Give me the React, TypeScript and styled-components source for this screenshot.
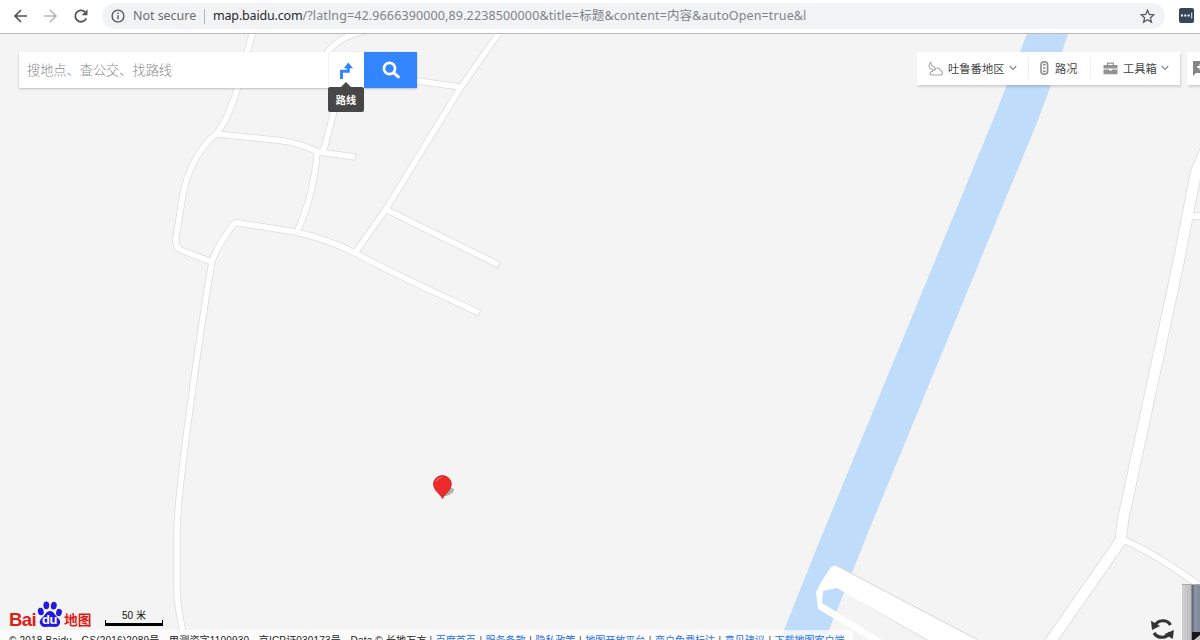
import React from "react";
import styled, { createGlobalStyle } from "styled-components";

const Global = createGlobalStyle`
  * { box-sizing: border-box; }
  body { margin: 0; overflow: hidden; background: #f4f4f4; font-family: "Noto Sans", "Noto Sans CJK SC", sans-serif; }
  svg { display: block; flex: none; }
`;

const Page = styled.div`
  width: 1200px;
  height: 640px;
  overflow: hidden;
  display: flex;
  flex-direction: column;
`;

const BrowserBar = styled.header`
  height: 34px;
  flex: none;
  display: flex;
  align-items: flex-start;
  padding: 3px 0 0 13px;
  background: #fff;
  border-bottom: 1px solid #b9b9b9;
`;

const NavButton = styled.span<{ $gap: number }>`
  display: flex;
  margin: 5px ${(p) => p.$gap}px 0 0;
`;

const AddressBar = styled.div`
  width: 1063px;
  height: 26px;
  border-radius: 13px;
  background: #f1f3f4;
  display: flex;
  align-items: center;
  padding: 0 10px 0 9px;
  color: #808489;
  font-size: 12.5px;
  line-height: 26px;
  white-space: nowrap;
`;

const Security = styled.span`
  width: 71px;
  margin-left: 8px;
  color: #6b6f73;
  letter-spacing: -0.04px;
`;

const Divider = styled.span`
  width: 1px;
  height: 15px;
  background: #b4b7ba;
  margin-right: 8px;
`;

const Url = styled.span`
  flex: 1;
  letter-spacing: 0.13px;
`;

const Host = styled.span`
  color: #26292c;
  letter-spacing: -0.17px;
`;

const Extension = styled.span`
  width: 15px;
  height: 15px;
  margin: 5px 0 0 14px;
  border-radius: 2px;
  background: #34475a;
  display: flex;
  align-items: center;
  justify-content: center;
`;

const MapArea = styled.main`
  flex: 1;
  position: relative;
  overflow: hidden;
`;

const SearchBox = styled.div`
  position: absolute;
  left: 19px;
  top: 18px;
  height: 36px;
  display: flex;
  background: #fff;
  box-shadow: 0 1px 2px rgba(0, 0, 0, 0.22);
`;

const SearchInput = styled.div`
  width: 309px;
  padding-left: 8px;
  font: 300 13.2px/36px "Noto Sans CJK SC", sans-serif;
  color: #8b8b8b;
`;

const RouteButton = styled.div`
  width: 36px;
  display: flex;
  justify-content: center;
  padding-top: 10px;
  border-left: 1px solid #f3f3f3;
  position: relative;
`;

const SearchButton = styled.div`
  width: 53px;
  background: #3385ff;
  display: flex;
  align-items: center;
  justify-content: center;
`;

const Tooltip = styled.div`
  position: absolute;
  left: -1px;
  top: 35px;
  width: 36px;
  height: 25px;
  border-radius: 2px;
  background: #474747;
  color: #fff;
  font: 700 10.2px/25px "Noto Sans CJK SC", sans-serif;
  text-align: center;

  &::before {
    content: "";
    position: absolute;
    left: 13px;
    top: -5px;
    border: 5px solid transparent;
    border-top: 0;
    border-bottom-color: #474747;
  }
`;

const Tools = styled.div`
  position: absolute;
  left: 917px;
  top: 18px;
  height: 33px;
  display: flex;
  gap: 7px;
`;

const ToolPanel = styled.div<{ $width: number }>`
  width: ${(p) => p.$width}px;
  height: 33px;
  padding-bottom: 1px;
  background: #fff;
  display: flex;
  align-items: center;
  box-shadow: 1px 2px 2px rgba(0, 0, 0, 0.15);
`;

const Tool = styled.div<{ $width: number; $pad: number; $gap: number }>`
  width: ${(p) => p.$width}px;
  height: 20px;
  padding-left: ${(p) => p.$pad}px;
  display: flex;
  align-items: center;
  font: 400 11.3px/20px "Noto Sans CJK SC", sans-serif;
  color: #444;
  white-space: nowrap;

  & + & { border-left: 1px solid #eee; }
  & > span { margin: 0 4px 0 ${(p) => p.$gap}px; }
`;

const Brand = styled.div`
  position: absolute;
  left: 9px;
  top: 565px;
  height: 30px;
  display: flex;
  align-items: flex-end;
  color: #dd1d18;
`;

const BrandLatin = styled.span`
  width: 28px;
  font: 700 18.6px/19px "Liberation Sans", sans-serif;
  letter-spacing: -0.6px;
`;

const Paw = styled.span`
  width: 26px;
  height: 28px;
  position: relative;
  margin-bottom: 1px;
`;

const PawText = styled.span`
  position: absolute;
  left: 5px;
  top: 12px;
  color: #fff;
  font: 700 13px/15px "Liberation Sans", sans-serif;
  letter-spacing: -0.5px;
`;

const BrandHan = styled.span`
  margin-left: 1px;
  font: 700 13.7px/19px "Noto Sans CJK SC", sans-serif;
`;

const Scale = styled.div`
  position: absolute;
  left: 105px;
  top: 575px;
  width: 58px;
  height: 17px;
  border: solid #000;
  border-width: 0 1px 3px;
  text-align: center;
  font: 400 10px/13px "Liberation Sans", "Noto Sans CJK SC", sans-serif;
  color: #111;
  border-image: linear-gradient(transparent 11px, #000 11px) 0 1 3 1;
`;

const Copyright = styled.footer`
  position: absolute;
  left: 0;
  top: 596px;
  width: 853px;
  height: 20px;
  padding: 3px 0 0 9px;
  background: rgba(255, 255, 255, 0.7);
  display: flex;
  white-space: nowrap;
  font: 400 10px/16px "Liberation Sans", "Noto Sans CJK SC", sans-serif;
  color: #222;
`;

const Legal = styled.span<{ $width: number }>`
  width: ${(p) => p.$width}px;
  flex: none;
  letter-spacing: 0.19px;
`;

const FooterLink = styled.span`
  color: #2c6fe0;
  &::before { content: "|"; color: #444; margin: 0 3.6px; }
`;

const RefreshButton = styled.div`
  position: absolute;
  left: 1150px;
  top: 583px;
`;

const Thumbnail = styled.div`
  position: absolute;
  left: 1182px;
  top: 550px;
  width: 18px;
  height: 56px;
  padding-left: 10px;
  border-top: 1px solid #aaa;
  background: linear-gradient(90deg, #d0d0d0 0, #bdbdbd 9px, #596273 10px, #8d96a7 13px, #808a9d 100%);
`;

const roads = [
  "M254,28 L246,56 C238,88 230,118 216,134 C200,146 186,172 182,200 L176,238 Q175,248 182,250.500 L212,262",
  "M216,134 L280,140.500 Q300,143 318,152 L355,157",
  "M366,31 Q340,35 325,55",
  "M338,80 L333,115 L323,153",
  "M317,152 C315,180 310,202 297,232",
  "M212,262 Q216,248 233,225 Q235,222 239,223 L296,232 Q330,240 355,253 C390,272 430,290 479,313",
  "M501,30 L461,87 L386,209 L355,253",
  "M410,80 L461,87",
  "M386,209.500 L498.500,264.800",
  "M212,262 C205,300 178,480 177,530 L177,590 C177,608 181,622 185,642",
];

const deadEnds = ["M350,156.300 L355.800,157.100", "M475,311.200 L479.800,313.400", "M494,262.600 L499.300,265.200"];
const wideRoads = ["M1210,140 L1196,172 L1179,260 L1123,520 L1120.500,541 L1048,645"];
const sideRoads = ["M1121,539 Q1150,550 1200,586", "M1192,216 L1202,216"];

function Roads({ paths, width }: { paths: string[]; width: number }) {
  return (
    <>
      {paths.map((d) => (
        <path key={d} d={d} strokeWidth={width} />
      ))}
    </>
  );
}

function MapCanvas() {
  const pier =
    "M831,567 L835,565.500 L977,640 L928,640 L837,588 L823,591 L822,603 L882,640 L870,640 L818,609 L816,592 L823,579 Z";
  return (
    <svg width="1200" height="606" viewBox="0 34 1200 606" fill="none" strokeLinejoin="round">
      <rect y="34" width="1200" height="606" fill="#f4f4f4" />
      <path d="M1027,34 L993,120 L820,540 L780,640 L825,640 L865,540 L1038,120 L1051,85 L1068,34Z" fill="#bfdcfa" />
      <g stroke="#dcdcdc">
        <Roads paths={roads} width={7} />
        <Roads paths={deadEnds} width={7} />
        <Roads paths={wideRoads} width={12} />
        <Roads paths={sideRoads} width={7.5} />
        <path d="M835,565.500 L977,640 M866,604 L928,640" strokeWidth="2" />
      </g>
      <g stroke="#fff">
        <Roads paths={roads} width={5.5} />
        <Roads paths={wideRoads} width={10.4} />
        <Roads paths={sideRoads} width={6} />
      </g>
      <path d={pier} fill="#fff" />
      <ellipse cx="448" cy="492" rx="6.500" ry="3.200" transform="rotate(-25 448 492)" fill="#b3b3b3" />
      <path d="M442.500,498.500 C440,493.500 433.500,490.500 433.500,484 A8.800,8.300 0 0 1 451.300,484 C451.300,490.500 445,493.500 442.500,498.500Z" fill="#ee2a2d" stroke="#b92a2b" strokeWidth=".8" />
      <path d="M436,481.500 Q437.500,478 441,477.500" stroke="#f88" strokeWidth="1" />
    </svg>
  );
}

const Chevron = () => (
  <svg width="8" height="6" viewBox="0 0 8 6" fill="none" stroke="#818799" strokeWidth="1.200">
    <path d="M.8 1 4 4.400 7.200 1" />
  </svg>
);

export default function App() {
  return (
    <Page>
      <Global />
      <BrowserBar>
        <NavButton $gap={15}>
          <svg width="15" height="16" viewBox="0 0 15 16" fill="none" stroke="#505357" strokeWidth="1.700">
            <path d="M14 8H2M8 2 2 8l6 6" />
          </svg>
        </NavButton>
        <NavButton $gap={15}>
          <svg width="15" height="16" viewBox="0 0 15 16" fill="none" stroke="#b7b9bb" strokeWidth="1.700">
            <path d="M1 8h12M7 2l6 6-6 6" />
          </svg>
        </NavButton>
        <NavButton $gap={13}>
          <svg width="16" height="16" viewBox="0 0 16 16" fill="none" stroke="#505357" strokeWidth="1.800">
            <path d="M13.200 10.300A5.700 5.700 0 1 1 12 4" />
            <path d="M14.500 1.200v6H8.700z" fill="#505357" stroke="none" />
          </svg>
        </NavButton>
        <AddressBar>
          <svg width="14" height="14" viewBox="0 0 14 14" fill="none" stroke="#56595d" strokeWidth="1.400">
            <circle cx="7" cy="7" r="5.900" />
            <path d="M7 6.200v4M7 3.500v1.500" />
          </svg>
          <Security>Not secure</Security>
          <Divider />
          <Url>
            <Host>map.baidu.com</Host>/?latlng=42.9666390000,89.2238500000&amp;title=标题&amp;content=内容&amp;autoOpen=true&amp;l
          </Url>
          <svg width="15" height="15" viewBox="0 0 15 15" fill="none" stroke="#55585c" strokeWidth="1.300">
            <path d="M7.500 1.300 9.300 5.500 13.700 5.900 10.400 8.800 11.400 13.100 7.500 10.800 3.600 13.100 4.600 8.800 1.300 5.900 5.700 5.500Z" />
          </svg>
        </AddressBar>
        <Extension>
          <svg width="13" height="7" viewBox="0 0 13 7" fill="#fff">
            <path d="M1 2.500h2v2H1zM4.300 2.500h2v2h-2zM7.600 2.500h2v2h-2zM11.300 .5h.9v6h-.9z" />
          </svg>
        </Extension>
      </BrowserBar>
      <MapArea>
        <MapCanvas />
        <SearchBox>
          <SearchInput>搜地点、查公交、找路线</SearchInput>
          <RouteButton>
            <svg width="16" height="18" viewBox="0 0 16 18">
              <path d="M2.500 17V9.200H9.300V5" fill="none" stroke="#3385ff" strokeWidth="3" />
              <path d="M4.800 6.200 9.300.6 14 6.200Z" fill="#3385ff" />
            </svg>
            <Tooltip>路线</Tooltip>
          </RouteButton>
          <SearchButton>
            <svg width="18" height="18" viewBox="0 0 18 18" fill="none" stroke="#fff">
              <circle cx="7.500" cy="7.500" r="5.600" strokeWidth="2.600" />
              <path d="m11.800 11.800 4.500 4" strokeWidth="3" strokeLinecap="round" />
            </svg>
          </SearchButton>
        </SearchBox>
        <Tools>
          <ToolPanel $width={263}>
            <Tool $width={111} $pad={11} $gap={5}>
              <svg width="15" height="15" viewBox="0 0 15 15" fill="none" stroke="#a5a5a5" strokeWidth="1.100">
                <path d="M3.500 14h8.700a2.200 2.200 0 0 0 0-4.500c-.3-3-4.400-3.300-5.200-.6-1.300-.7-2.400.2-2.200 1.500C1.300 10.500 1.300 14 3.500 14ZM4.900 8.900C.8 8 0 4.200 2.700 1.300c.1 3 1.700 4.600 4.700 5.300" />
              </svg>
              <span>吐鲁番地区</span>
              <Chevron />
            </Tool>
            <Tool $width={62} $pad={11} $gap={6}>
              <svg width="9" height="14" viewBox="0 0 9 14" fill="none" stroke="#8c8c8c" strokeWidth="1.600">
                <rect x="1" y=".8" width="6.600" height="12.400" rx="3" />
                <path d="M3 3.600h2.600M3 7h2.600M3 10.400h2.600" strokeWidth="1.700" />
              </svg>
              <span>路况</span>
            </Tool>
            <Tool $width={90} $pad={12} $gap={5}>
              <svg width="15" height="13" viewBox="0 0 15 13" fill="#929292">
                <path d="M4 3V.6h7V3h3.500v3.500H.5V3zm1.200 0h4.600V1.700H5.200zM.5 7.500H6v1h3v-1h5.500v4.700H.5z" />
              </svg>
              <span>工具箱</span>
              <Chevron />
            </Tool>
          </ToolPanel>
          <ToolPanel $width={100}>
            <Tool $width={100} $pad={6} $gap={0}>
              <svg width="14" height="16" viewBox="0 0 14 16" fill="#858585">
                <path fillRule="evenodd" d="M0 1h14v12H3l-3 3zM6.500 4v2H4.300v2h2.200v2h2V8h2V6h-2V4z" />
              </svg>
            </Tool>
          </ToolPanel>
        </Tools>
        <Brand>
          <BrandLatin>Bai</BrandLatin>
          <Paw>
            <svg width="26" height="28" viewBox="0 0 26 28" fill="#2319dc">
              <ellipse cx="3.800" cy="11.500" rx="2.900" ry="3.800" transform="rotate(-12 3.800 11.500)" />
              <ellipse cx="9.300" cy="5.300" rx="2.900" ry="3.900" />
              <ellipse cx="16.800" cy="5.700" rx="2.900" ry="3.900" transform="rotate(12 16.800 5.700)" />
              <ellipse cx="22" cy="12.500" rx="2.900" ry="3.700" transform="rotate(12 22 12.500)" />
              <path d="M13 11c3.500 0 4.500 3.500 7 6s4 4 2.600 7.300C21 28 17 26.800 13 26.800S5.500 28 3.500 24.500 4 19 6 17s3.500-6 7-6Z" />
            </svg>
            <PawText>du</PawText>
          </Paw>
          <BrandHan>地图</BrandHan>
        </Brand>
        <Scale>50 米</Scale>
        <Copyright>
          <Legal $width={417}>
            © 2018 Baidu - GS(2016)2089号 - 甲测资字1100930 - 京ICP证030173号 - Data © 长地万方
          </Legal>
          <FooterLink>百度首页</FooterLink>
          <FooterLink>服务条款</FooterLink>
          <FooterLink>隐私政策</FooterLink>
          <FooterLink>地图开放平台</FooterLink>
          <FooterLink>商户免费标注</FooterLink>
          <FooterLink>意见建议</FooterLink>
          <FooterLink>下载地图客户端</FooterLink>
        </Copyright>
        <RefreshButton>
          <svg width="26" height="25" viewBox="0 0 26 25" fill="none" stroke="#333" strokeWidth="3.200">
            <path d="M5 8.500C8 2.500 17 2 20.500 8M20 15.500C17 21.500 8 22 4 16" />
            <path d="M1 3.700 2 13l8-4zM24 13l-1.300 9L14.500 17z" fill="#333" stroke="none" />
          </svg>
        </RefreshButton>
        <Thumbnail>
          <svg width="8" height="55" viewBox="0 0 8 55">
            <path d="M0 47H8V55H0Z" fill="#171717" />
            <path d="M2 55 8 50V55Z" fill="#c5c5c5" />
          </svg>
        </Thumbnail>
      </MapArea>
    </Page>
  );
}
